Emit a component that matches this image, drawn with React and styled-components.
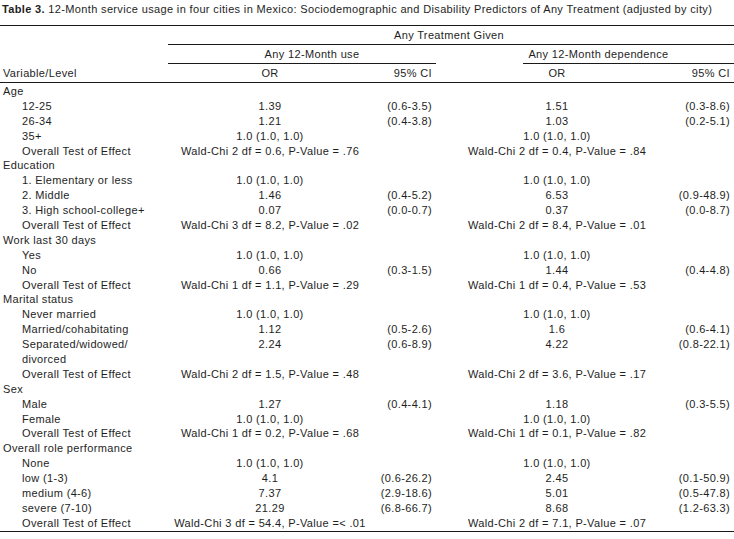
import React from "react";
import styled, { createGlobalStyle } from "styled-components";

const GlobalStyle = createGlobalStyle`
  body {
    margin: 0;
    background: #ffffff;
    color: #1e1e1e;
    font-family: "Liberation Sans", Arial, sans-serif;
    font-size: 11px;
    letter-spacing: 0.35px;
  }
`;

const COLS = "168px 204px 64px 14px 214px 70px";

const sections = [
  {
    name: "Age",
    rows: [
      ["12-25", "1.39", "(0.6-3.5)", "1.51", "(0.3-8.6)"],
      ["26-34", "1.21", "(0.4-3.8)", "1.03", "(0.2-5.1)"],
      ["35+", "1.0 (1.0, 1.0)", "", "1.0 (1.0, 1.0)", ""],
      ["Overall Test of Effect", "Wald-Chi 2 df = 0.6, P-Value = .76", "", "Wald-Chi 2 df = 0.4, P-Value = .84", ""],
    ],
  },
  {
    name: "Education",
    rows: [
      ["1. Elementary or less", "1.0 (1.0, 1.0)", "", "1.0 (1.0, 1.0)", ""],
      ["2. Middle", "1.46", "(0.4-5.2)", "6.53", "(0.9-48.9)"],
      ["3. High school-college+", "0.07", "(0.0-0.7)", "0.37", "(0.0-8.7)"],
      ["Overall Test of Effect", "Wald-Chi 3 df = 8.2, P-Value = .02", "", "Wald-Chi 2 df = 8.4, P-Value = .01", ""],
    ],
  },
  {
    name: "Work last 30 days",
    rows: [
      ["Yes", "1.0 (1.0, 1.0)", "", "1.0 (1.0, 1.0)", ""],
      ["No", "0.66", "(0.3-1.5)", "1.44", "(0.4-4.8)"],
      ["Overall Test of Effect", "Wald-Chi 1 df = 1.1, P-Value = .29", "", "Wald-Chi 1 df = 0.4, P-Value = .53", ""],
    ],
  },
  {
    name: "Marital status",
    rows: [
      ["Never married", "1.0 (1.0, 1.0)", "", "1.0 (1.0, 1.0)", ""],
      ["Married/cohabitating", "1.12", "(0.5-2.6)", "1.6", "(0.6-4.1)"],
      ["Separated/widowed/", "2.24", "(0.6-8.9)", "4.22", "(0.8-22.1)"],
      ["divorced", "", "", "", ""],
      ["Overall Test of Effect", "Wald-Chi 2 df = 1.5, P-Value = .48", "", "Wald-Chi 2 df = 3.6, P-Value = .17", ""],
    ],
  },
  {
    name: "Sex",
    rows: [
      ["Male", "1.27", "(0.4-4.1)", "1.18", "(0.3-5.5)"],
      ["Female", "1.0 (1.0, 1.0)", "", "1.0 (1.0, 1.0)", ""],
      ["Overall Test of Effect", "Wald-Chi 1 df = 0.2, P-Value = .68", "", "Wald-Chi 1 df = 0.1, P-Value = .82", ""],
    ],
  },
  {
    name: "Overall role performance",
    rows: [
      ["None", "1.0 (1.0, 1.0)", "", "1.0 (1.0, 1.0)", ""],
      ["low (1-3)", "4.1", "(0.6-26.2)", "2.45", "(0.1-50.9)"],
      ["medium (4-6)", "7.37", "(2.9-18.6)", "5.01", "(0.5-47.8)"],
      ["severe (7-10)", "21.29", "(6.8-66.7)", "8.68", "(1.2-63.3)"],
      ["Overall Test of Effect", "Wald-Chi 3 df = 54.4, P-Value =< .01", "", "Wald-Chi 2 df = 7.1, P-Value = .07", ""],
    ],
  },
];

const App = () => {
  return (
    <>
      <GlobalStyle />
      <Page>
        <Caption>
          <b>Table 3.</b> 12-Month service usage in four cities in Mexico: Sociodemographic and
          Disability Predictors of Any Treatment (adjusted by city)
        </Caption>
        <Table>
          <HeadRow>
            <span />
            <GroupHead $span="2 / 7">Any Treatment Given</GroupHead>
          </HeadRow>
          <HeadRow>
            <span />
            <SubHead $span="2 / 4">Any 12-Month use</SubHead>
            <span />
            <SubHead $span="5 / 7" $shift>
              Any 12-Month dependence
            </SubHead>
          </HeadRow>
          <ColumnRow>
            <Label>Variable/Level</Label>
            <Or>OR</Or>
            <Ci>95% CI</Ci>
            <span />
            <Or>OR</Or>
            <Ci>95% CI</Ci>
          </ColumnRow>
          <Body>
            {sections.map((s) => (
              <React.Fragment key={s.name}>
                <Row>
                  <Label>{s.name}</Label>
                </Row>
                {s.rows.map((r, i) => (
                  <Row key={i}>
                    <Label $indent>{r[0]}</Label>
                    <Or>{r[1]}</Or>
                    <Ci>{r[2]}</Ci>
                    <span />
                    <Or>{r[3]}</Or>
                    <Ci>{r[4]}</Ci>
                  </Row>
                ))}
              </React.Fragment>
            ))}
          </Body>
        </Table>
      </Page>
    </>
  );
};

const Page = styled.div`
  width: 734px;
  height: 539px;
  overflow: hidden;
`;

const Caption = styled.div`
  height: 25px;
  padding: 3px 0 0 2px;
  box-sizing: border-box;
  line-height: 13px;
  white-space: nowrap;

  b {
    font-weight: bold;
  }
`;

const Table = styled.div`
  border-top: 1px solid #1a1a1a;
`;

const HeadRow = styled.div`
  display: grid;
  grid-template-columns: ${COLS};
  height: 19px;
`;

const GroupHead = styled.div`
  grid-column: ${(p) => p.$span};
  border-bottom: 1px solid #1a1a1a;
  text-align: center;
  line-height: 18px;
  padding-right: 4px;
`;

const SubHead = styled.div`
  grid-column: ${(p) => p.$span};
  border-bottom: 1px solid #1a1a1a;
  text-align: center;
  line-height: 18px;
  margin-left: ${(p) => (p.$shift ? "73px" : "0")};
  padding-left: ${(p) => (p.$shift ? "0" : "20px")};
  padding-right: ${(p) => (p.$shift ? "60px" : "0")};
`;

const ColumnRow = styled.div`
  display: grid;
  grid-template-columns: ${COLS};
  height: 18px;
  line-height: 18px;
  border-bottom: 1px solid #1a1a1a;
`;

const Body = styled.div`
  padding: 1px 0 0;
  border-bottom: 1px solid #1a1a1a;
`;

const Row = styled.div`
  display: grid;
  grid-template-columns: ${COLS};
  height: 14.9px;
  line-height: 14.9px;
  white-space: nowrap;
`;

const Label = styled.div`
  padding-left: ${(p) => (p.$indent ? "22px" : "3px")};
`;

const Or = styled.div`
  text-align: center;
`;

const Ci = styled.div`
  text-align: right;
  padding-right: 4px;
`;

export default App;
